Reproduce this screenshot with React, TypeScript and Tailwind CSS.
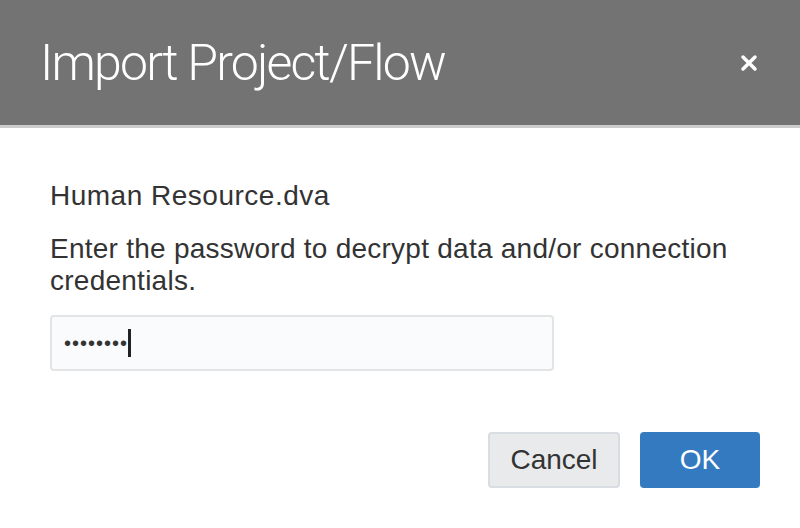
export default function App() {
  return (
    <div className="w-[800px] h-[528px] bg-white flex flex-col" style={{ fontFamily: '"Liberation Sans", Arial, sans-serif' }}>
      <div className="h-[125px] bg-[#737373] flex items-center justify-between pl-[40px] pr-[42px] shrink-0">
        <div className="text-white text-[50px] font-light tracking-[-1.8px] leading-none" style={{ fontFamily: 'Roboto, sans-serif' }}>Import Project/Flow</div>
        <svg width="18" height="18" viewBox="0 0 18 18">
          <path d="M3 3 L15 15 M15 3 L3 15" stroke="white" strokeWidth="3.5" strokeLinecap="round" />
        </svg>
      </div>
      <div className="h-[3px] bg-[#cccccc] shrink-0" />
      <div className="flex flex-col px-[50px] pt-[52px] text-[#333333]">
        <div className="text-[28px] leading-[32px] tracking-[0.5px]">Human Resource.dva</div>
        <div className="text-[28px] leading-[32px] tracking-[0.25px] mt-[21px] w-[700px]">Enter the password to decrypt data and/or connection credentials.</div>
        <div className="mt-[18px] w-[504px] h-[56px] rounded-[4px] border-2 border-[#e3e4e6] bg-[#fafbfc] flex items-center pl-[12px]">
          <span className="text-[#333] text-[20px] tracking-[1px] leading-none">••••••••</span>
          <span className="w-[3px] h-[28px] bg-[#222]" />
        </div>
        <div className="flex justify-end gap-[20px] mt-[61px] mr-[-10px]">
          <button className="w-[132px] h-[56px] rounded-[4px] border-2 border-[#d8dde3] bg-[#e9eaec] text-[28px] text-[#333]">Cancel</button>
          <button className="w-[120px] h-[56px] rounded-[4px] bg-[#337ac1] text-[28px] text-white">OK</button>
        </div>
      </div>
    </div>
  );
}
